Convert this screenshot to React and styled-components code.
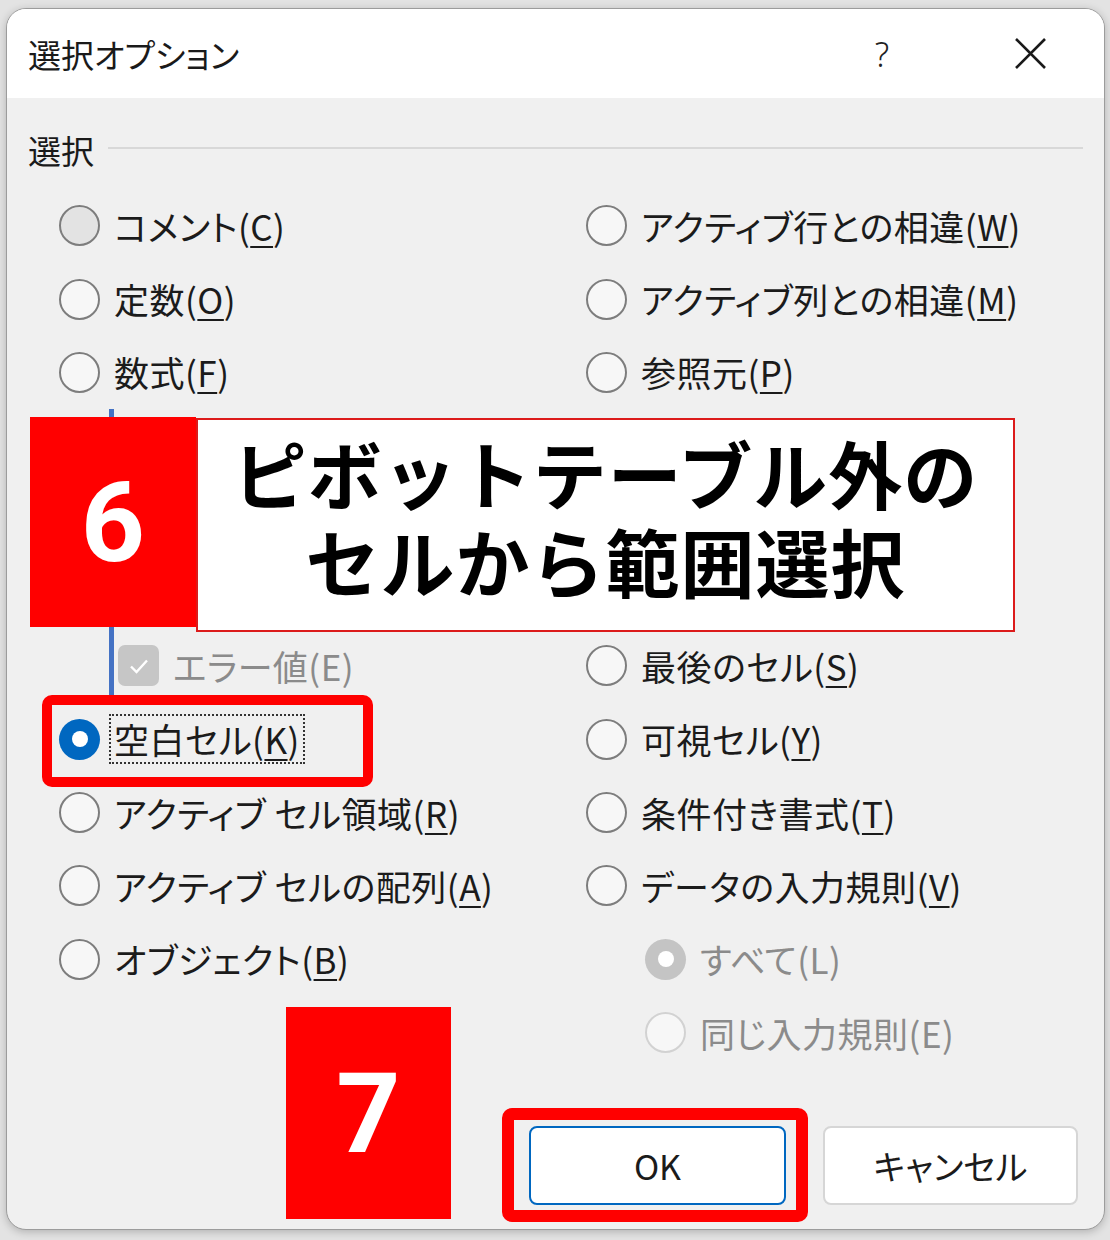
import React from "react";
import styled, { createGlobalStyle, css } from "styled-components";

const GlobalStyle = createGlobalStyle`
  html, body {
    margin: 0;
    padding: 0;
  }
  body {
    background: #e3e3e3;
    font-family: "Noto Sans CJK JP", "Noto Sans", sans-serif;
  }
`;

const Page = styled.div`
  position: relative;
  width: 1110px;
  height: 1240px;
  box-sizing: border-box;
  padding: 8px 5px 10px 6px;
  background: #e3e3e3;
  overflow: hidden;
`;

const Dialog = styled.div`
  width: 1099px;
  height: 1222px;
  box-sizing: border-box;
  border: 1px solid #9c9c9c;
  border-radius: 20px;
  overflow: hidden;
  background: #f0f0f0;
  display: flex;
  flex-direction: column;
  box-shadow: 0 2px 8px rgba(0, 0, 0, 0.22);
`;

const TitleBar = styled.div`
  height: 89px;
  flex: none;
  background: #fff;
  display: flex;
  align-items: center;
  padding: 0 57px 0 21px;
`;

const Title = styled.div`
  flex: 1;
  font-size: 33px;
  color: #1a1a1a;
  font-feature-settings: "palt" 1;
`;

const Help = styled.span`
  width: 40px;
  text-align: center;
  font-family: "Noto Sans", sans-serif;
  font-size: 34px;
  font-weight: 300;
  color: #222;
  margin-right: 112px;
`;

const Body = styled.div`
  flex: 1;
  display: flex;
  flex-direction: column;
  padding: 0 21px 24px 21px;
`;

const GroupHeader = styled.div`
  margin-top: 34px;
  height: 36px;
  display: flex;
  align-items: center;
  gap: 14px;
  font-size: 33px;
  color: #1a1a1a;
`;

const GroupLine = styled.div`
  flex: 1;
  height: 2px;
  margin-top: -5px;
  background: #d8d8d8;
`;

const Grid = styled.div`
  display: grid;
  grid-template-columns: 527px 1fr;
  padding-left: 31px;
  margin-top: 21px;
`;

const Column = styled.div`
  display: flex;
  flex-direction: column;
`;

const Row = styled.div`
  height: 73.36px;
  display: flex;
  align-items: center;
  gap: 9px;
  padding-left: ${(p) => p.$indent || 0}px;
`;

// the options under the step-6 note are covered, rows keep their place
const CoveredRow = styled.div`
  height: 73.36px;
`;

const SubGroup = styled.div`
  margin-left: 50px;
  padding-left: 4px;
  border-left: 5px solid #4472c4;
`;

const RadioCircle = styled.span`
  width: 41px;
  height: 41px;
  flex: none;
  box-sizing: border-box;
  border-radius: 50%;
  display: flex;
  align-items: center;
  justify-content: center;
  border: 2px solid #7d7d7d;
  background: #f7f7f7;
  ${(p) =>
    p.$hover &&
    css`
      background: #e3e3e3;
    `}
  ${(p) =>
    p.$disabled &&
    css`
      border-color: #d2d2d2;
      background: #f7f7f7;
    `}
  ${(p) =>
    p.$checked &&
    css`
      border: none;
      background: ${p.$disabled ? "#c4c4c4" : "#0067c0"};
      &::after {
        content: "";
        width: 16px;
        height: 16px;
        border-radius: 50%;
        background: #fff;
      }
    `}
`;

const CheckBox = styled.span`
  width: 41px;
  height: 41px;
  flex: none;
  border-radius: 7px;
  background: #c6c6c6;
  display: flex;
  align-items: center;
  justify-content: center;
`;

const Label = styled.span`
  font-size: 35px;
  line-height: 46px;
  letter-spacing: 0.5px;
  padding: 0 3px;
  border: 2px dotted ${(p) => (p.$focused ? "#333" : "transparent")};
  color: ${(p) => (p.$disabled ? "#8b8b8b" : "#1b1b1b")};
  font-feature-settings: "palt" 1;
  white-space: nowrap;
`;

const Key = styled.span`
  text-decoration: underline;
  text-decoration-thickness: 2px;
  text-underline-offset: 5px;
`;

const Footer = styled.div`
  margin-top: auto;
  display: flex;
  justify-content: flex-end;
  gap: 37px;
  padding-right: 5px;
`;

const Button = styled.button`
  width: ${(p) => p.$w}px;
  height: 79px;
  box-sizing: border-box;
  border-radius: 8px;
  background: #fff;
  border: ${(p) => (p.$primary ? "2px solid #0067c0" : "2px solid #d6d6d6")};
  font-family: "Noto Sans CJK JP", "Noto Sans", sans-serif;
  font-size: 34px;
  color: #1b1b1b;
  font-feature-settings: "palt" 1;
  padding: 0;
`;

const Callout = styled.div`
  position: absolute;
  left: 30px;
  top: 417px;
  display: flex;
  align-items: flex-start;
`;

const StepBadge = styled.div`
  width: ${(p) => p.$w}px;
  height: ${(p) => p.$h}px;
  background: #ff0000;
  color: #fff;
  display: flex;
  align-items: center;
  justify-content: center;
  font-family: Roboto, "Liberation Sans", sans-serif;
  font-weight: 700;
  font-size: 112px;
  ${(p) =>
    p.$float &&
    css`
      position: absolute;
      left: ${p.$x}px;
      top: ${p.$y}px;
    `}
`;

const Note = styled.div`
  width: 819px;
  height: 214px;
  margin-top: 1px;
  box-sizing: border-box;
  border: 2px solid #dc1b1b;
  background: #fff;
  display: flex;
  flex-direction: column;
  align-items: center;
  justify-content: center;
  font-size: 74px;
  font-weight: 700;
  line-height: 88px;
  letter-spacing: 1px;
  color: #000;
  padding-bottom: 18px;
`;

const Highlight = styled.div`
  position: absolute;
  left: ${(p) => p.$x}px;
  top: ${(p) => p.$y}px;
  width: ${(p) => p.$w}px;
  height: ${(p) => p.$h}px;
  box-sizing: border-box;
  border: ${(p) => p.$b}px solid #ff0000;
  border-radius: 10px;
`;

const CloseIcon = () => (
  <svg width="33" height="33" viewBox="0 0 33 33">
    <path d="M2 2 L31 31 M31 2 L2 31" stroke="#1a1a1a" strokeWidth="2.6" fill="none" />
  </svg>
);

const CheckMark = () => (
  <svg width="22" height="22" viewBox="0 0 22 22">
    <path d="M3 11.5 L8.5 17 L19 5.5" stroke="#fff" strokeWidth="2.4" fill="none" />
  </svg>
);

const Option = ({ text, k, plain, checked, disabled, hover, focused, indent }) => (
  <Row $indent={indent}>
    <RadioCircle $checked={checked} $disabled={disabled} $hover={hover} />
    <Label $disabled={disabled} $focused={focused}>
      {text}({k ? <Key>{k}</Key> : plain})
    </Label>
  </Row>
);

const Check = ({ text, plain }) => (
  <Row>
    <CheckBox>
      <CheckMark />
    </CheckBox>
    <Label $disabled>
      {text}({plain})
    </Label>
  </Row>
);

export default function App() {
  return (
    <Page>
      <GlobalStyle />
      <Dialog>
        <TitleBar>
          <Title>選択オプション</Title>
          <Help>?</Help>
          <CloseIcon />
        </TitleBar>
        <Body>
          <GroupHeader>
            選択
            <GroupLine />
          </GroupHeader>
          <Grid>
            <Column>
              <Option text="コメント" k="C" hover />
              <Option text="定数" k="O" />
              <Option text="数式" k="F" />
              <SubGroup>
                <CoveredRow />
                <CoveredRow />
                <CoveredRow />
                <Check text="エラー値" plain="E" />
              </SubGroup>
              <Option text="空白セル" k="K" checked focused />
              <Option text="アクティブ セル領域" k="R" />
              <Option text="アクティブ セルの配列" k="A" />
              <Option text="オブジェクト" k="B" />
            </Column>
            <Column>
              <Option text="アクティブ行との相違" k="W" />
              <Option text="アクティブ列との相違" k="M" />
              <Option text="参照元" k="P" />
              <CoveredRow />
              <CoveredRow />
              <CoveredRow />
              <Option text="最後のセル" k="S" />
              <Option text="可視セル" k="Y" />
              <Option text="条件付き書式" k="T" />
              <Option text="データの入力規則" k="V" />
              <Option text="すべて" plain="L" disabled checked indent={59} />
              <Option text="同じ入力規則" plain="E" disabled indent={59} />
            </Column>
          </Grid>
          <Footer>
            <Button $w={257} $primary>
              OK
            </Button>
            <Button $w={255}>キャンセル</Button>
          </Footer>
        </Body>
      </Dialog>

      <Callout>
        <StepBadge $w={166} $h={210}>
          6
        </StepBadge>
        <Note>
          <div>ピボットテーブル外の</div>
          <div>セルから範囲選択</div>
        </Note>
      </Callout>
      <StepBadge $float $x={286} $y={1007} $w={165} $h={212}>
        7
      </StepBadge>
      <Highlight $x={42} $y={695} $w={331} $h={92} $b={10} />
      <Highlight $x={502} $y={1108} $w={306} $h={114} $b={12} />
    </Page>
  );
}
